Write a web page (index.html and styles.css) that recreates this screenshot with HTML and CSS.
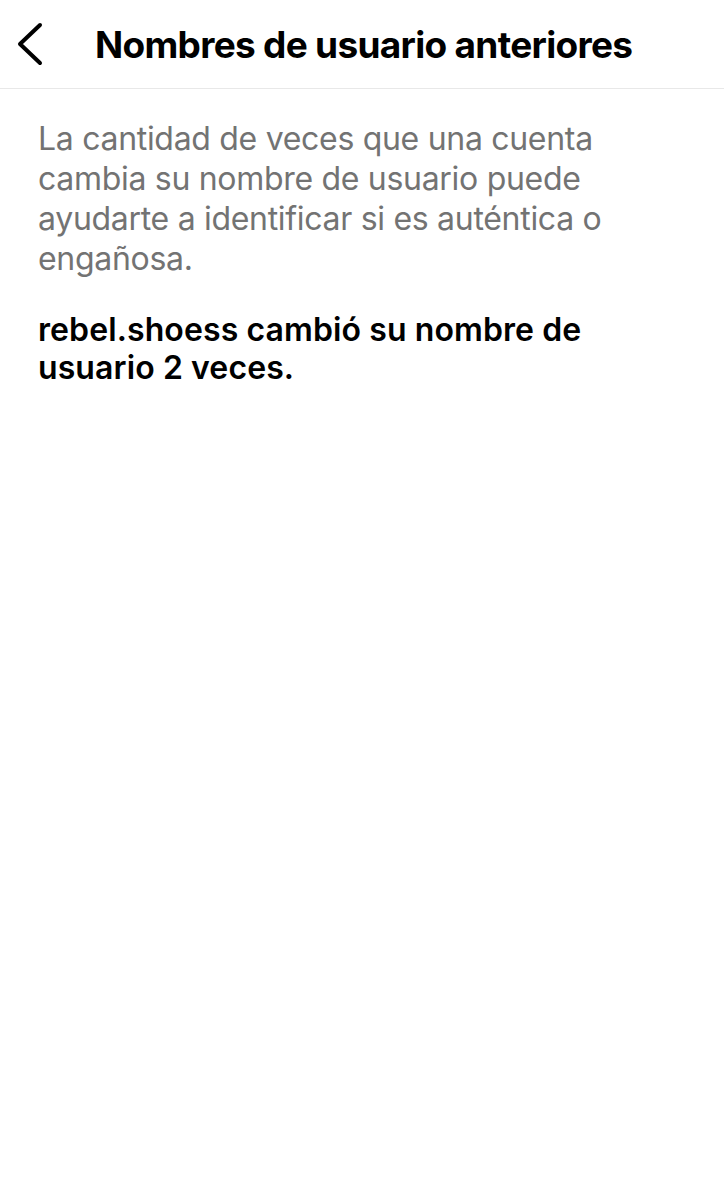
FILE: index.html
```html
<!DOCTYPE html>
<html lang="es">
<head>
  <meta charset="UTF-8">
  <title>Nombres de usuario anteriores</title>
  <link rel="stylesheet" href="styles.css">
</head>
<body>
  <header class="topbar">
    <button class="back" aria-label="Atrás">
      <svg width="30" height="44" viewBox="0 0 30 44">
        <polyline points="25,3 5,22 25,41" fill="none" stroke="#000" stroke-width="4" stroke-linecap="round" stroke-linejoin="round"/>
      </svg>
    </button>
    <h1 class="title">Nombres de usuario anteriores</h1>
  </header>

  <main class="content">
    <p class="info">La cantidad de veces que una cuenta cambia su nombre de usuario puede ayudarte a identificar si es auténtica o engañosa.</p>
    <p class="count">rebel.shoess cambió su nombre de usuario 2 veces.</p>
  </main>
</body>
</html>
```

FILE: styles.css
```css
* {
  box-sizing: border-box;
}

body {
  margin: 0;
  background: #fff;
  font-family: Inter, "Noto Sans", sans-serif;
  color: #000;
}

.topbar {
  display: flex;
  align-items: center;
  height: 89px;
  padding-left: 15px;
  border-bottom: 1px solid #e8e8e8;
}

.back {
  display: flex;
  background: none;
  border: none;
  padding: 0;
  margin-right: 50px;
  cursor: pointer;
}

.title {
  margin: 0;
  font-size: 37px;
  font-weight: 700;
  letter-spacing: -0.7px;
}

.content {
  padding: 30px 38px;
}

.info {
  margin: 0;
  font-size: 32px;
  line-height: 40px;
  letter-spacing: -0.3px;
  color: #737373;
}

.count {
  margin: 32px 0 0;
  font-size: 32px;
  line-height: 38px;
  font-weight: 600;
  letter-spacing: 0.1px;
}
```
